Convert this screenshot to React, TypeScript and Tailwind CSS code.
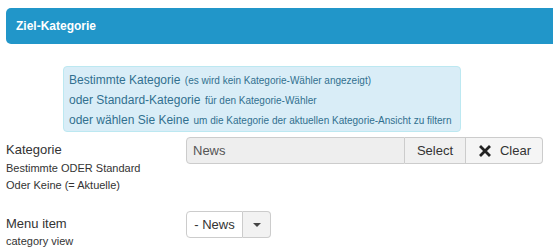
import React from 'react';

const InfoLine: React.FC<{ big: string; small: string }> = ({ big, small }) => (
  <div className="h-[20px] leading-[20px] whitespace-nowrap">
    <span className="text-[12px]">{big}</span> <span className="text-[10px]">{small}</span>
  </div>
);

const App: React.FC = () => {
  return (
    <div className="w-[553px] h-[252px] overflow-hidden bg-white font-[family-name:'Liberation_Sans',Arial,sans-serif] text-[#333]">
      <div className="pt-[8px] pl-[6px]">
        <div className="h-[36px] bg-[#2196c9] rounded-l-[5px] flex items-center pl-[10px]">
          <h3 className="text-white font-bold text-[12px]">Ziel-Kategorie</h3>
        </div>
      </div>

      <div className="mt-[22px] ml-[63px] w-[398px] h-[66px] bg-[#d9edf7] border border-[#bce8f1] rounded-[4px] px-[5px] pt-[2px] text-[#31708f]">
        <InfoLine big="Bestimmte Kategorie" small="(es wird kein Kategorie-Wähler angezeigt)" />
        <InfoLine big="oder Standard-Kategorie" small="für den Kategorie-Wähler" />
        <InfoLine big="oder wählen Sie Keine" small="um die Kategorie der aktuellen Kategorie-Ansicht zu filtern" />
      </div>

      <div className="flex mt-[5px] pl-[6px]">
        <div className="w-[180px] pt-[3px]">
          <div className="text-[13px] leading-[20px]">Kategorie</div>
          <div className="text-[11px] leading-[17px]">Bestimmte ODER Standard</div>
          <div className="text-[11px] leading-[17px]">Oder Keine (= Aktuelle)</div>
        </div>
        <div className="flex h-[27px] text-[13px]">
          <div className="w-[219px] bg-[#eeeeee] border border-[#cccccc] rounded-l-[4px] px-[6px] flex items-center text-[#555]">
            News
          </div>
          <div className="w-[61px] bg-[#f0f0f0] border border-l-0 border-[#cccccc] flex items-center justify-center">
            Select
          </div>
          <div className="w-[77px] bg-[#f5f5f5] border border-l-0 border-[#cccccc] rounded-r-[4px] flex items-center justify-center gap-[9px] pl-[2px]">
            <svg width="12" height="12" viewBox="0 0 12 12">
              <path d="M2 2 L10 10 M10 2 L2 10" stroke="#222" strokeWidth="2.8" strokeLinecap="square" />
            </svg>
            <span>Clear</span>
          </div>
        </div>
      </div>

      <div className="flex mt-[17px] pl-[6px]">
        <div className="w-[180px] pt-[3px]">
          <div className="text-[13px] leading-[19px]">Menu item</div>
          <div className="text-[11px] leading-[17px]">category view</div>
        </div>
        <div className="flex h-[27px] text-[13px]">
          <div className="w-[57px] bg-white border border-[#cccccc] rounded-l-[4px] flex items-center justify-center">
            - News
          </div>
          <div className="w-[28px] bg-[#f2f2f2] border border-l-0 border-[#cccccc] rounded-r-[4px] flex items-center justify-center">
            <svg width="8" height="4" viewBox="0 0 8 4">
              <path d="M0 0 L8 0 L4 4 Z" fill="#444" />
            </svg>
          </div>
        </div>
      </div>
    </div>
  );
};

export default App;
